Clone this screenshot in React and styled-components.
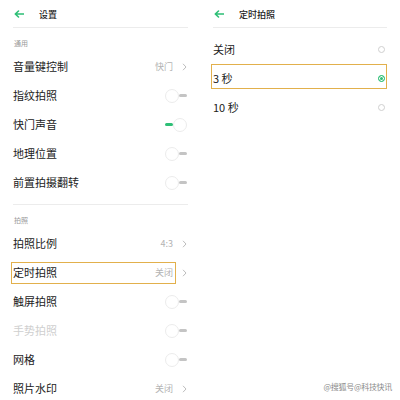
import React from "react";
import styled, { createGlobalStyle } from "styled-components";

const GlobalStyle = createGlobalStyle`
  html, body {
    margin: 0;
    padding: 0;
    background: #fff;
  }
  body {
    font-family: "Noto Sans CJK SC", "Noto Sans", sans-serif;
    color: #222;
  }
`;

const Page = styled.div`
  position: relative;
  width: 400px;
  height: 400px;
  overflow: hidden;
  display: grid;
  grid-template-columns: 200px 200px;
  background: #fff;
`;

const Panel = styled.div`
  padding: 0 ${(p) => p.$right}px 0 13px;
  display: flex;
  flex-direction: column;
`;

const Header = styled.div`
  height: 28px;
  box-sizing: border-box;
  border-bottom: 1px solid #ececec;
  display: flex;
  align-items: center;
  gap: ${(p) => p.$gap}px;
  padding-left: 1px;
`;

const Title = styled.span`
  font-size: 9px;
  font-weight: 500;
  color: #222;
  line-height: 1;
  margin-top: 2px;
`;

const SectionLabel = styled.div`
  padding: 10px 0 4px 1px;
  height: 10px;
  font-size: 7px;
  line-height: 10px;
  color: #9a9a9a;
`;

const Divider = styled.div`
  margin-top: 7px;
  height: 1px;
  background: #ececec;
`;

const List = styled.div`
  display: flex;
  flex-direction: column;
  margin-top: ${(p) => p.$top || 0}px;
`;

const Row = styled.div`
  position: relative;
  height: 29px;
  display: flex;
  align-items: center;
  justify-content: space-between;
`;

const Label = styled.span`
  font-size: 11px;
  line-height: 1;
  color: ${(p) => (p.$disabled ? "#cfcfcf" : "#222")};
`;

const Value = styled.span`
  display: flex;
  align-items: center;
  gap: 9px;
  font-size: 9px;
  color: #b3b3b3;
  margin-right: 1px;
`;

const Highlight = styled.div`
  position: absolute;
  left: -2px;
  right: ${(p) => p.$right}px;
  top: ${(p) => p.$top}px;
  bottom: ${(p) => p.$bottom}px;
  border: 1.5px solid #e2b04c;
  pointer-events: none;
`;

const ToggleWrap = styled.div`
  width: 22px;
  height: 13px;
  display: flex;
  align-items: center;
  flex-direction: ${(p) => (p.$on ? "row-reverse" : "row")};
  margin-right: 1px;
`;

const Knob = styled.div`
  width: 12px;
  height: 12px;
  border-radius: 50%;
  border: 1px solid #ececec;
  background: #fff;
  flex-shrink: 0;
`;

const Bar = styled.div`
  width: 8px;
  height: 3px;
  border-radius: 2px;
  background: ${(p) => (p.$on ? "#2dbf76" : "#c4c4c4")};
`;

const Radio = styled.div`
  width: 7px;
  height: 7px;
  border-radius: 50%;
  box-sizing: border-box;
  border: 1px solid ${(p) => (p.$on ? "#2dbf76" : "#cfcfcf")};
  background: ${(p) => (p.$on ? "#2dbf76" : "#fff")};
  box-shadow: ${(p) => (p.$on ? "inset 0 0 0 1px #fff" : "none")};
  margin-right: 2px;
`;

const Watermark = styled.div`
  position: absolute;
  right: 8px;
  bottom: 8px;
  font-size: 8px;
  color: #8a8a8a;
  letter-spacing: -0.3px;
`;

const BackArrow = () => (
  <svg width="10" height="8" viewBox="0 0 10 8">
    <path d="M9.5 4H1.5M4.5 1L1.3 4l3.2 3" fill="none" stroke="#2dbf76" strokeWidth="1.6" strokeLinecap="round" strokeLinejoin="round" />
  </svg>
);

const Chevron = () => (
  <svg width="5" height="8" viewBox="0 0 5 8">
    <path d="M1 0.8L4 4L1 7.2" fill="none" stroke="#bdbdbd" strokeWidth="1" />
  </svg>
);

const Toggle = ({ on }) => (
  <ToggleWrap $on={on}>
    <Knob />
    <Bar $on={on} />
  </ToggleWrap>
);

const general = [
  { label: "音量键控制", value: "快门" },
  { label: "指纹拍照", toggle: false },
  { label: "快门声音", toggle: true },
  { label: "地理位置", toggle: false },
  { label: "前置拍摄翻转", toggle: false },
];

const shooting = [
  { label: "拍照比例", value: "4:3" },
  { label: "定时拍照", value: "关闭", boxed: true },
  { label: "触屏拍照", toggle: false },
  { label: "手势拍照", toggle: false, disabled: true },
  { label: "网格", toggle: false },
  { label: "照片水印", value: "关闭" },
];

const timers = [
  { label: "关闭" },
  { label: "3 秒", on: true },
  { label: "10 秒" },
];

const SettingRow = ({ item }) => (
  <Row>
    <Label $disabled={item.disabled}>{item.label}</Label>
    {item.value !== undefined ? (
      <Value>
        {item.value}
        <Chevron />
      </Value>
    ) : (
      <Toggle on={item.toggle} />
    )}
    {item.boxed && <Highlight $right={12} $top={4} $bottom={3} />}
  </Row>
);

export default function App() {
  return (
    <>
      <GlobalStyle />
      <Page>
        <Panel $right={12}>
          <Header $gap={15}>
            <BackArrow />
            <Title>设置</Title>
          </Header>
          <SectionLabel>通用</SectionLabel>
          <List>
            {general.map((item) => (
              <SettingRow key={item.label} item={item} />
            ))}
          </List>
          <Divider />
          <SectionLabel>拍照</SectionLabel>
          <List>
            {shooting.map((item) => (
              <SettingRow key={item.label} item={item} />
            ))}
          </List>
        </Panel>
        <Panel $right={13}>
          <Header $gap={15}>
            <BackArrow />
            <Title>定时拍照</Title>
          </Header>
          <List $top={7}>
            {timers.map((t) => (
              <Row key={t.label}>
                <Label>{t.label}</Label>
                <Radio $on={t.on} />
                {t.on && <Highlight $right={0} $top={0} $bottom={4} />}
              </Row>
            ))}
          </List>
        </Panel>
        <Watermark>@搜狐号@科技快讯</Watermark>
      </Page>
    </>
  );
}
